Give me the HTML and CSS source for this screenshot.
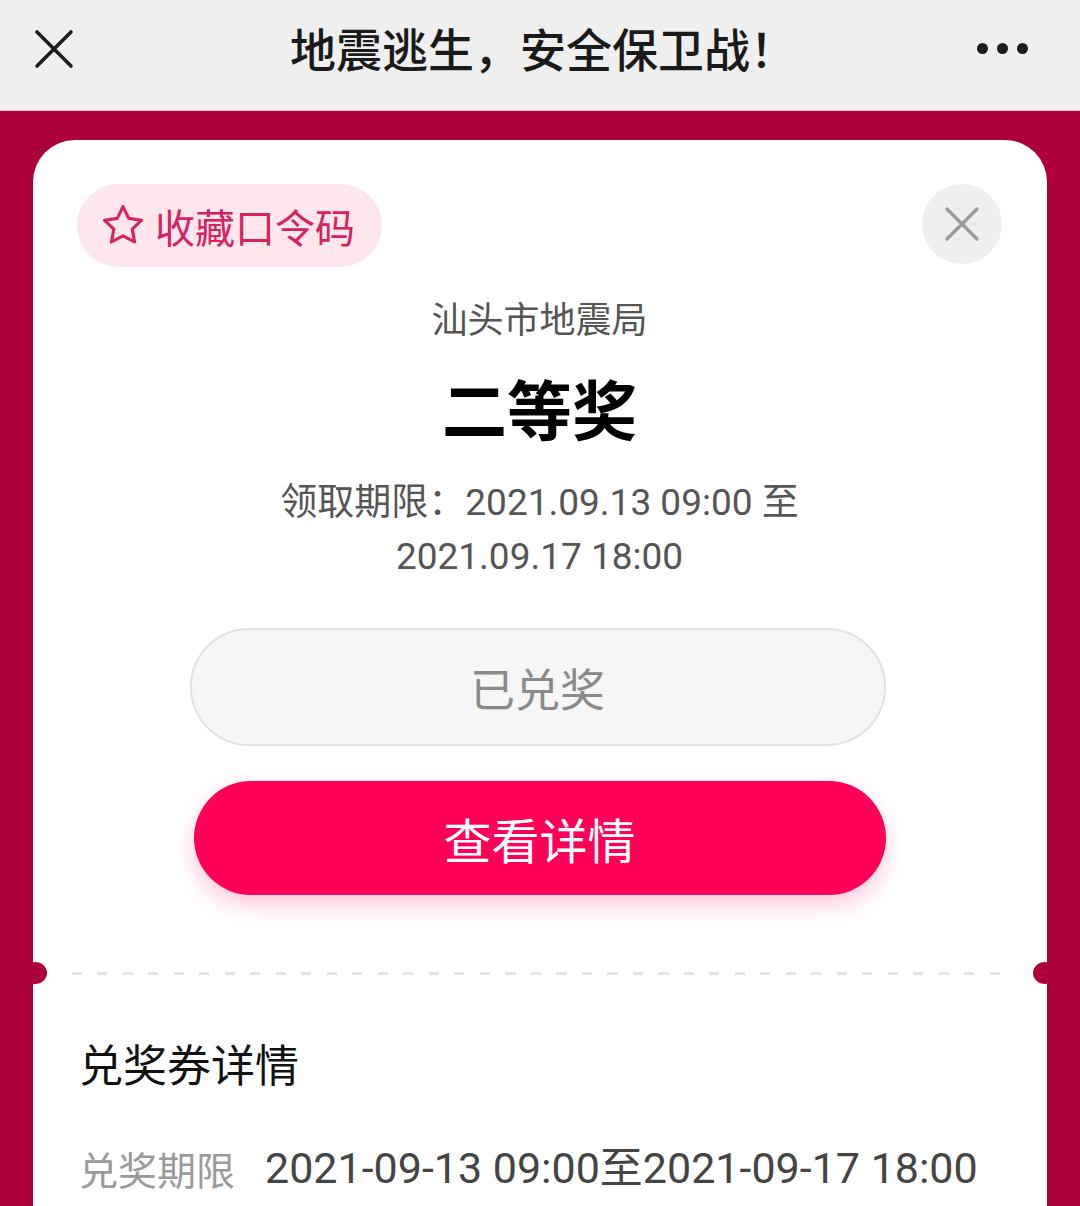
FILE: index.html
```html
<!DOCTYPE html>
<html lang="zh-CN">
<head>
<meta charset="utf-8">
<title>地震逃生，安全保卫战！</title>
<link rel="stylesheet" href="styles.css">
</head>
<body>
<header class="topbar">
  <div class="topbar-row">
    <div class="tb-left">
      <svg class="tb-close" width="40" height="40" viewBox="0 0 40 40"><path d="M3 3L37 37M37 3L3 37" stroke="#1c1c1c" stroke-width="3.6" stroke-linecap="round" fill="none"/></svg>
    </div>
    <div class="tb-title">地震逃生，安全保卫战！</div>
    <div class="tb-right">
      <span class="dot"></span><span class="dot"></span><span class="dot"></span>
    </div>
  </div>
</header>
<main class="page">
  <section class="card">
    <div class="card-top">
      <div class="top-row">
        <div class="fav-pill">
          <svg class="star" width="48" height="48" viewBox="0 0 24 24"><path d="M12 2.3l2.85 5.9 6.45.9-4.7 4.5 1.2 6.4L12 16.95l-5.8 3.05 1.2-6.4-4.7-4.5 6.45-.9z" fill="none" stroke="#d8215f" stroke-width="1.55" stroke-linejoin="round"/></svg>
          <span class="fav-text">收藏口令码</span>
        </div>
        <div class="close-circle">
          <svg width="34" height="34" viewBox="0 0 34 34"><path d="M2 2L32 32M32 2L2 32" stroke="#9b9b9b" stroke-width="3.2" stroke-linecap="round" fill="none"/></svg>
        </div>
      </div>
      <div class="org">汕头市地震局</div>
      <div class="prize">二等奖</div>
      <div class="period">领取期限：2021.09.13 09:00 至<br>2021.09.17 18:00</div>
      <div class="btn btn-done">已兑奖</div>
      <div class="btn btn-view">查看详情</div>
    </div>
    <div class="sep">
      <div class="dash"></div>
      <span class="notch notch-l"></span>
      <span class="notch notch-r"></span>
    </div>
    <div class="details">
      <h2 class="details-title">兑奖券详情</h2>
      <div class="detail-row">
        <span class="detail-label">兑奖期限</span>
        <span class="detail-value">2021-09-13 09:00至2021-09-17 18:00</span>
      </div>
    </div>
  </section>
</main>
</body>
</html>
```

FILE: styles.css
```css
* { box-sizing: border-box; }
html, body {
  margin: 0;
  padding: 0;
  height: 1206px;
  overflow: hidden;
}
body {
  background: #ad003b;
  font-family: "Roboto", "Noto Sans CJK SC", sans-serif;
  color: #222;
}
.topbar {
  height: 111px;
  background: #efefef;
  border-bottom: 1px solid #d9c6cc;
}
.topbar-row {
  height: 96px;
  display: flex;
  align-items: center;
  justify-content: space-between;
  padding: 0 52px 0 34px;
}
.tb-left, .tb-right {
  width: 70px;
  display: flex;
  align-items: center;
}
.tb-right {
  justify-content: flex-end;
  gap: 9px;
}
.tb-close { display: block; margin-top: 2px; }
.tb-title {
  font-family: "Noto Sans CJK SC", sans-serif;
  font-size: 46px;
  font-weight: 500;
  color: #1a1a1a;
  line-height: 1;
  margin-left: 24px;
  margin-top: -2px;
}
.dot {
  width: 11px;
  height: 11px;
  border-radius: 50%;
  background: #1c1c1c;
}
.page {
  padding: 29px 33px 0;
}
.card {
  background: #fff;
  border-radius: 42px 42px 0 0;
  height: 1100px;
}
.card-top {
  padding: 44px 45px 0 44px;
}
.top-row {
  display: flex;
  justify-content: space-between;
  align-items: flex-start;
}
.fav-pill {
  height: 83px;
  border-radius: 42px;
  background: #fde6ec;
  display: flex;
  align-items: center;
  gap: 8px;
  padding: 0 27px 0 22px;
}
.star { display: block; }
.fav-text {
  font-family: "Noto Sans CJK SC", sans-serif;
  font-size: 40px;
  color: #d8215f;
  line-height: 1;
}
.close-circle {
  width: 80px;
  height: 80px;
  border-radius: 50%;
  background: #efefef;
  display: flex;
  align-items: center;
  justify-content: center;
}
.org {
  text-align: center;
  font-family: "Noto Sans CJK SC", sans-serif;
  font-size: 36px;
  line-height: 50px;
  color: #555;
  margin-top: 25px;
}
.prize {
  text-align: center;
  font-family: "Noto Sans CJK SC", sans-serif;
  font-size: 65px;
  font-weight: 700;
  line-height: 90px;
  color: #000;
  margin-top: 20px;
}
.period {
  text-align: center;
  font-size: 37px;
  line-height: 54px;
  color: #555;
  margin-top: 24px;
}
.btn {
  width: 696px;
  margin-left: auto;
  margin-right: auto;
  border-radius: 60px;
  display: flex;
  align-items: center;
  justify-content: center;
  font-family: "Noto Sans CJK SC", sans-serif;
}
.btn-done {
  margin-top: 44px;
  height: 118px;
  background: #f6f6f6;
  border: 2px solid #e2e2e2;
  color: #8a8a8a;
  font-size: 45px;
  transform: translateX(-2px);
}
.btn-view {
  margin-top: 35px;
  height: 114px;
  width: 692px;
  background: #ff0059;
  color: #fff;
  font-size: 48px;
  box-shadow: 0 10px 22px rgba(255, 0, 89, 0.22);
}
.sep {
  position: relative;
  height: 22px;
  margin-top: 67px;
  display: flex;
  align-items: center;
  padding: 0 37px 0 39px;
}
.dash {
  flex: 1;
  height: 3px;
  background: repeating-linear-gradient(to right, #e4e4e4 0 10px, transparent 10px 25.5px);
}
.notch {
  position: absolute;
  top: 0;
  width: 24px;
  height: 22px;
  border-radius: 50%;
  background: #ad003b;
}
.notch-l { left: -10px; }
.notch-r { right: -10px; }
.details {
  padding: 0 46px;
}
.details-title {
  margin: 49px 0 0;
  font-family: "Noto Sans CJK SC", sans-serif;
  font-size: 44px;
  font-weight: 400;
  line-height: 60px;
  color: #111;
}
.detail-row {
  margin-top: 47px;
  display: flex;
  align-items: center;
  gap: 30px;
  line-height: 56px;
  white-space: nowrap;
}
.detail-label {
  font-family: "Noto Sans CJK SC", sans-serif;
  font-size: 39px;
  color: #9a9a9a;
}
.detail-value {
  font-size: 43px;
  color: #444;
}
```
